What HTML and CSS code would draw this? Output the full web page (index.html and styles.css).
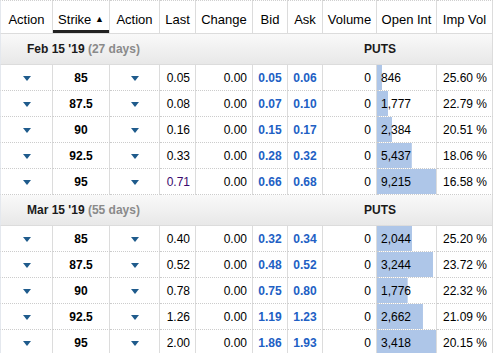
FILE: index.html
```html
<!DOCTYPE html>
<html lang="en">
<head>
    <meta charset="UTF-8">
    <title>Options Chain - Puts</title>
    <link rel="stylesheet" href="styles.css">
</head>
<body>
    <table id="chain">
        <colgroup>
            <col style="width:53px"><col style="width:57px"><col style="width:50px"><col style="width:36px">
            <col style="width:57px"><col style="width:35px"><col style="width:35px"><col style="width:54px">
            <col style="width:60px"><col style="width:56px">
        </colgroup>
        <thead>
            <tr>
                <th>Action</th>
                <th class="sorted">Strike <span class="caret">&#9650;</span></th>
                <th>Action</th>
                <th>Last</th>
                <th>Change</th>
                <th>Bid</th>
                <th>Ask</th>
                <th>Volume</th>
                <th>Open Int</th>
                <th>Imp Vol</th>
            </tr>
        </thead>
        <tbody id="rows"></tbody>
    </table>

    <script>
        const expiries = [
            {
                date: "Feb 15 '19", days: 27,
                rows: [
                    ["85", "0.05", "0.00", "0.05", "0.06", 0, 846, "25.60 %"],
                    ["87.5", "0.08", "0.00", "0.07", "0.10", 0, 1777, "22.79 %"],
                    ["90", "0.16", "0.00", "0.15", "0.17", 0, 2384, "20.51 %"],
                    ["92.5", "0.33", "0.00", "0.28", "0.32", 0, 5437, "18.06 %"],
                    ["95", "0.71", "0.00", "0.66", "0.68", 0, 9215, "16.58 %", "visited"]
                ]
            },
            {
                date: "Mar 15 '19", days: 55,
                rows: [
                    ["85", "0.40", "0.00", "0.32", "0.34", 0, 2044, "25.20 %"],
                    ["87.5", "0.52", "0.00", "0.48", "0.52", 0, 3244, "23.72 %"],
                    ["90", "0.78", "0.00", "0.75", "0.80", 0, 1776, "22.32 %"],
                    ["92.5", "1.26", "0.00", "1.19", "1.23", 0, 2662, "21.09 %"],
                    ["95", "2.00", "0.00", "1.86", "1.93", 0, 3418, "20.15 %"]
                ]
            }
        ];

        const tbody = document.getElementById('rows');

        expiries.forEach(exp => {
            const maxOi = Math.max(...exp.rows.map(r => r[6]));

            const group = document.createElement('tr');
            group.className = 'group';
            group.innerHTML =
                '<td colspan="7" class="expiry">' + exp.date + ' <span class="days">(' + exp.days + ' days)</span></td>' +
                '<td colspan="2" class="side">PUTS</td><td></td>';
            tbody.appendChild(group);

            exp.rows.forEach(r => {
                const tr = document.createElement('tr');
                tr.className = 'row';
                const pct = (r[6] / maxOi * 100).toFixed(1);
                tr.innerHTML =
                    '<td class="action"><span class="arrow"></span></td>' +
                    '<td class="strike">' + r[0] + '</td>' +
                    '<td class="action"><span class="arrow"></span></td>' +
                    '<td class="num' + (r[8] ? ' visited' : '') + '">' + r[1] + '</td>' +
                    '<td class="num">' + r[2] + '</td>' +
                    '<td class="quote">' + r[3] + '</td>' +
                    '<td class="quote">' + r[4] + '</td>' +
                    '<td class="num">' + r[5] + '</td>' +
                    '<td class="oi" style="--w:' + pct + '%">' + r[6].toLocaleString('en-US') + '</td>' +
                    '<td class="iv">' + r[7] + '</td>';
                tbody.appendChild(tr);
            });
        });
    </script>
</body>
</html>
```

FILE: styles.css
```css
body {
    margin: 0;
    font-family: "Liberation Sans", Arial, sans-serif;
    background-color: #fff;
    color: #000;
}
#chain {
    border-collapse: separate;
    border-spacing: 0;
    table-layout: fixed;
    width: 493px;
}
#chain th,
#chain td {
    box-sizing: border-box;
}
#chain th {
    height: 34px;
    padding: 5px 0 0;
    font-size: 13px;
    font-weight: normal;
    text-align: center;
    color: #000;
    border-top: 1px dotted #cfcfcf;
    border-right: 1px solid #dcdcdc;
    border-bottom: 1px solid #dcdcdc;
    white-space: nowrap;
}
#chain th:first-child {
    border-left: 1px solid #e4e8ee;
}
#chain th.sorted {
    box-shadow: inset 0 -3px 0 #222;
}
.caret {
    font-size: 9px;
    vertical-align: 2px;
}
.group td {
    height: 31px;
    padding: 0;
    font-size: 12px;
    font-weight: bold;
    background: linear-gradient(#f9f9f9, #e8e8e8);
    border-bottom: 1px solid #dcdcdc;
}
.group td.expiry {
    padding-left: 26px;
    color: #1a1a1a;
    border-left: 1px solid #e4e8ee;
}
.group .days {
    color: #8a8a8a;
}
.group td.side {
    text-align: center;
    color: #1a1a1a;
}
.group td:last-child {
    border-right: 1px solid #dcdcdc;
}
.row td {
    height: 26px;
    padding: 0 6px;
    font-size: 12px;
    border-right: 1px solid #dcdcdc;
    border-bottom: 1px dotted #cccccc;
    white-space: nowrap;
}
.row td:first-child {
    border-left: 1px solid #e4e8ee;
}
.row td.action {
    text-align: center;
    padding: 0;
}
.arrow {
    display: inline-block;
    width: 0;
    height: 0;
    border-left: 4px solid transparent;
    border-right: 4px solid transparent;
    border-top: 5px solid #1f5b8c;
    vertical-align: 1px;
}
.row td.strike {
    text-align: center;
    font-weight: bold;
}
.row td.num {
    text-align: right;
    padding-right: 5px;
}
.row td.visited {
    color: #3a0a6e;
}
.row td.quote {
    text-align: center;
    padding: 0;
    font-weight: bold;
    color: #2160c4;
}
.row td.oi {
    padding: 0 4px;
    text-align: left;
    background: linear-gradient(#aec6e8, #aec6e8) no-repeat left top;
    background-size: var(--w) 100%;
}
.row td.iv {
    text-align: right;
    padding-right: 7px;
}
```
